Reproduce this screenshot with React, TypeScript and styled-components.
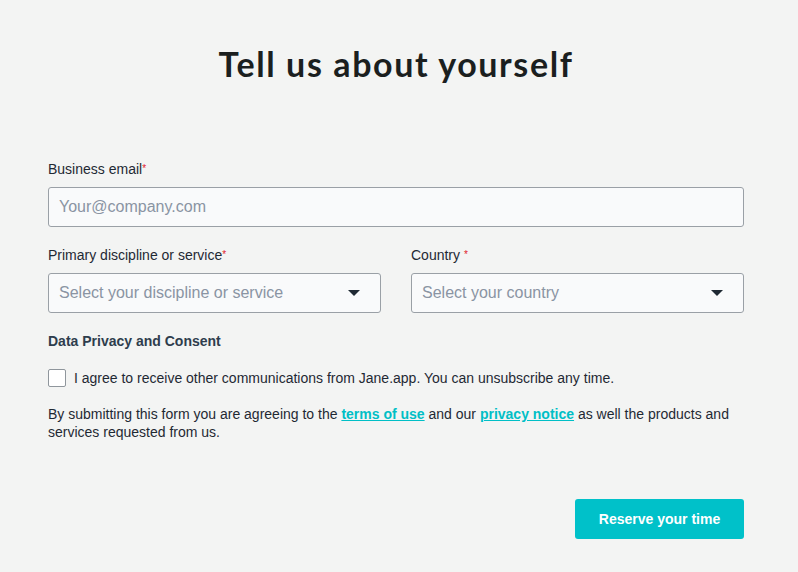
import styled, { createGlobalStyle } from "styled-components";

const GlobalStyle = createGlobalStyle`
  html, body {
    margin: 0;
    padding: 0;
    background: #f3f4f3;
  }

  body {
    font-family: "Liberation Sans", Arial, sans-serif;
    color: #1f2933;
  }
`;

const Page = styled.main`
  box-sizing: border-box;
  height: 572px;
  padding: 42px 54px 0 48px;
`;

const Title = styled.h1`
  color: #1b1f1f;
  font-family: Lato, "Noto Sans", sans-serif;
  font-size: 34px;
  font-weight: 700;
  letter-spacing: 1.6px;
  line-height: 44px;
  margin: 0 0 74px;
  text-align: center;
`;

const Form = styled.form`
  display: flex;
  flex-direction: column;
`;

const Row = styled.div`
  display: grid;
  grid-template-columns: 1fr 1fr;
  column-gap: 30px;
  margin-top: 19px;
`;

const Field = styled.label`
  display: flex;
  flex-direction: column;
`;

const LabelText = styled.span`
  font-size: 14px;
  line-height: 18px;
  margin-bottom: 9px;
  color: #1f2933;
`;

const Required = styled.span<{ $gap?: boolean }>`
  color: #e0202a;
  font-size: 10px;
  vertical-align: top;
  margin-left: ${({ $gap }) => ($gap ? "4px" : "0")};
`;

const Input = styled.input`
  box-sizing: border-box;
  height: 40px;
  width: 100%;
  border: 1px solid #9aa0a6;
  border-radius: 3px;
  background: #f9fafb;
  font-family: inherit;
  font-size: 16px;
  color: #1f2933;
  padding: 0 10px;
  outline: none;

  &::placeholder {
    color: #8a94a3;
  }
`;

const SelectBox = styled.div`
  box-sizing: border-box;
  height: 40px;
  display: flex;
  align-items: center;
  justify-content: space-between;
  border: 1px solid #9aa0a6;
  border-radius: 3px;
  background: #f9fafb;
  padding: 0 20px 0 10px;
  font-size: 16px;
  color: #8a94a3;
`;

const Caret = styled.span`
  width: 0;
  height: 0;
  border-left: 6px solid transparent;
  border-right: 6px solid transparent;
  border-top: 6px solid #1f2933;
`;

const SectionHeading = styled.h2`
  font-size: 14px;
  font-weight: 700;
  color: #2e3d4d;
  line-height: 18px;
  margin: 19px 0 0;
`;

const ConsentRow = styled.label`
  display: flex;
  align-items: center;
  gap: 8px;
  margin-top: 19px;
  font-size: 14px;
  line-height: 18px;
`;

const CheckBox = styled.span`
  box-sizing: border-box;
  width: 18px;
  height: 18px;
  border: 1px solid #8f969c;
  border-radius: 2px;
  background: #ffffff;
  flex: none;
`;

const Notice = styled.p`
  font-size: 14px;
  line-height: 18px;
  margin: 18px 0 0;
  color: #1f2933;
`;

const TextLink = styled.a`
  color: #00bfc6;
  font-weight: 700;
  text-decoration: underline;
`;

const Actions = styled.div`
  display: flex;
  justify-content: flex-end;
  margin-top: 58px;
`;

const SubmitButton = styled.button`
  width: 169px;
  height: 40px;
  border: none;
  border-radius: 3px;
  background: #00c1c9;
  color: #ffffff;
  font-family: inherit;
  font-size: 14px;
  font-weight: 700;
  cursor: pointer;
`;

export default function App() {
  return (
    <>
      <GlobalStyle />
      <Page>
        <Title>Tell us about yourself</Title>
        <Form onSubmit={(e) => e.preventDefault()}>
          <Field>
            <LabelText>
              Business email<Required>*</Required>
            </LabelText>
            <Input type="email" placeholder="Your@company.com" />
          </Field>

          <Row>
            <Field>
              <LabelText>
                Primary discipline or service<Required>*</Required>
              </LabelText>
              <SelectBox>
                Select your discipline or service
                <Caret />
              </SelectBox>
            </Field>
            <Field>
              <LabelText>
                Country<Required $gap>*</Required>
              </LabelText>
              <SelectBox>
                Select your country
                <Caret />
              </SelectBox>
            </Field>
          </Row>

          <SectionHeading>Data Privacy and Consent</SectionHeading>
          <ConsentRow>
            <CheckBox />
            I agree to receive other communications from Jane.app. You can
            unsubscribe any time.
          </ConsentRow>

          <Notice>
            By submitting this form you are agreeing to the{" "}
            <TextLink href="#">terms of use</TextLink> and our{" "}
            <TextLink href="#">privacy notice</TextLink> as well the products
            and services requested from us.
          </Notice>

          <Actions>
            <SubmitButton type="submit">Reserve your time</SubmitButton>
          </Actions>
        </Form>
      </Page>
    </>
  );
}
